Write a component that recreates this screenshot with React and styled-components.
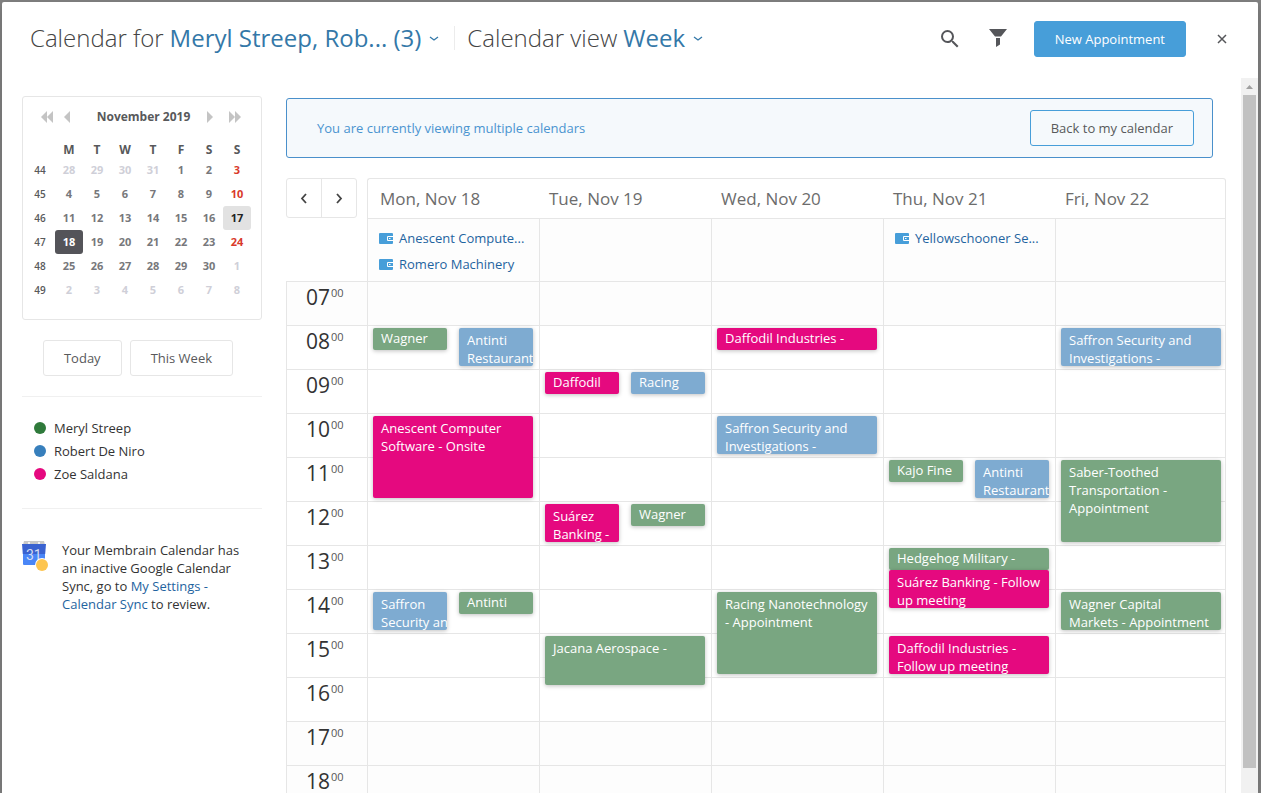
import React from "react";
import styled, { createGlobalStyle, css } from "styled-components";
import { MdSearch } from "react-icons/md";

const GlobalStyle = createGlobalStyle`
  *, *::before, *::after { box-sizing: border-box; }
  body {
    margin: 0;
    background: #828282;
    color: #333;
    font-family: "Open Sans", "Noto Sans", sans-serif;
    font-size: 13px;
    line-height: 18px;
  }
  button { font: inherit; color: inherit; margin: 0; padding: 0; cursor: pointer; }
  a { text-decoration: none; color: #1f64a0; }
  h1, h2, p, ul { margin: 0; padding: 0; font-weight: inherit; font-size: inherit; }
`;

const LINE = "#e6e6e6";
const ROW = 44;
const FIRST_HOUR = 7;

/* Dialog frame */

const Backdrop = styled.div`
  height: 100vh;
  padding: 2px 3px 0 2px;
  overflow: hidden;
`;

const Dialog = styled.div`
  display: flex;
  flex-direction: column;
  height: 100%;
  background: #fff;
  border-radius: 2px 2px 0 0;
  box-shadow: 0 4px 12px rgba(0, 0, 0, 0.2);
`;

const Header = styled.header`
  display: flex;
  align-items: center;
  flex: none;
  height: 76px;
  padding: 0 24px 2px 28px;
`;

const TitleGroup = styled.div`
  display: flex;
  align-items: center;
  flex: 1;
  padding-bottom: 2px;
`;

const Title = styled.h1`
  display: flex;
  align-items: center;
  gap: 6px;
  font-size: 24px;
  line-height: 32px;
  font-weight: 300;
  white-space: nowrap;
  color: #444;
`;

const TitlePicker = styled.button`
  display: flex;
  align-items: center;
  gap: 8px;
  border: 0;
  background: none;
  color: #3478a8;
  font-weight: 400;
`;

const TitleDivider = styled.span`
  width: 1px;
  height: 24px;
  margin: 0 12px 0 15px;
  background: #ececec;
`;

const HeaderActions = styled.div`
  display: flex;
  align-items: center;
  gap: 24px;
`;

const IconButton = styled.button`
  display: flex;
  align-items: center;
  justify-content: center;
  width: 24px;
  height: 24px;
  border: 0;
  background: none;
  color: #55565a;
`;

const buttonKinds = {
  primary: css`
    border-color: #479ed9;
    background: #479ed9;
    color: #fff;
    font-weight: 500;
  `,
  outline: css`
    border-color: #479ed9;
    background: transparent;
    color: #58595b;
  `,
  plain: css`
    border-color: ${LINE};
    background: #fff;
    color: #58595b;
  `,
};

const Button = styled.button`
  height: 36px;
  padding: 0 20px;
  border: 1px solid;
  border-radius: 3px;
  white-space: nowrap;
  ${(p) => buttonKinds[p.$kind || "plain"]}
`;

const Body = styled.div`
  display: flex;
  flex: 1;
  min-height: 0;
`;

const Scroller = styled.div`
  display: flex;
  flex: 1;
  min-width: 0;
  gap: 24px;
  padding: 0 15px 0 20px;
  overflow-y: auto;
  scrollbar-width: none;
`;

const ScrollTrack = styled.div`
  display: flex;
  flex-direction: column;
  flex: none;
  width: 17px;
  padding: 0 2px 25px;
  background: #f1f1f1;
`;

const ScrollArrow = styled.svg`
  display: block;
  flex: none;
  width: 13px;
  height: 17px;
`;

const ScrollThumb = styled.div`
  flex: 1;
  background: #c1c1c1;
`;

/* Sidebar */

const Sidebar = styled.aside`
  flex: none;
  width: 240px;
  padding-top: 18px;
`;

const MonthCard = styled.section`
  height: 224px;
  padding: 11px 10px 0 4px;
  border: 1px solid ${LINE};
  border-radius: 3px;
`;

const MonthNav = styled.div`
  display: flex;
  align-items: center;
  gap: 3px;
  padding: 0 6px 0 10px;
  color: #c4c4c4;
`;

const MonthName = styled.h2`
  flex: 1;
  padding-left: 10px;
  text-align: center;
  font-weight: 700;
  font-size: 12px;
  color: #58595b;
`;

const MonthArrow = styled.button`
  display: flex;
  align-items: center;
  justify-content: center;
  height: 16px;
  padding: 0 4px;
  border: 0;
  background: none;
  ${MonthName} + & + & { padding-left: 9px; }
`;

const MonthTable = styled.table`
  width: 224px;
  margin-top: 15px;
  border-collapse: collapse;
  table-layout: fixed;
  text-align: center;
`;

const WeekdayCell = styled.th`
  height: 17px;
  padding: 0;
  font-size: 12px;
  line-height: 17px;
  font-weight: 700;
  color: #58595b;
`;

const WeekNumber = styled.th`
  height: 24px;
  padding: 0 2px 0 0;
  font-size: 10px;
  font-weight: 600;
  color: #58595b;
`;

const DateCell = styled.td`
  height: 24px;
  padding: 0;
`;

const dateTones = {
  plain: css`color: #77787b;`,
  muted: css`color: #cfcfd8;`,
  sunday: css`color: #d93a2b;`,
  today: css`background: #e2e2e2; color: #222;`,
  selected: css`background: #545459; color: #fff;`,
};

const DateButton = styled.button`
  display: block;
  width: 28px;
  height: 24px;
  border: 0;
  border-radius: 3px;
  background: none;
  font-size: 11px;
  font-weight: 700;
  ${(p) => dateTones[p.$tone]}
`;

const QuickButtons = styled.div`
  display: flex;
  justify-content: center;
  gap: 8px;
  padding: 20px 8px 20px 0;
`;

const Legend = styled.ul`
  display: flex;
  flex-direction: column;
  gap: 5px;
  padding: 22px 12px 25px;
  border: solid #f0f0f0;
  border-width: 1px 0;
  list-style: none;
`;

const LegendItem = styled.li`
  display: flex;
  align-items: center;
  gap: 8px;
`;

const Dot = styled.span`
  width: 12px;
  height: 12px;
  border-radius: 50%;
  background: ${(p) => p.$color};
`;

const SyncNotice = styled.div`
  display: flex;
  gap: 12px;
  padding-top: 32px;
`;

/* Schedule */

const Main = styled.main`
  flex: 1;
  min-width: 0;
  padding-top: 20px;
`;

const Banner = styled.div`
  display: flex;
  align-items: center;
  justify-content: space-between;
  height: 60px;
  margin: 0 13px 20px 0;
  padding: 0 18px 0 30px;
  border: 1px solid #4a90cb;
  border-radius: 3px;
  background: #f5f9fc;
  color: #4a94d0;
`;

const columns = css`
  display: grid;
  grid-template-columns: 81px repeat(4, minmax(0, 172fr)) minmax(0, 171fr);
`;

const HeadRow = styled.div`
  ${columns}
  height: 41px;
`;

const WeekNav = styled.div`
  display: flex;
  width: 71px;
  height: 40px;
  border: 1px solid ${LINE};
  border-radius: 3px;
`;

const WeekNavButton = styled.button`
  display: flex;
  align-items: center;
  justify-content: center;
  flex: 1;
  border: 0;
  background: none;
  color: #444;
  & + & { border-left: 1px solid ${LINE}; }
`;

const DayHead = styled.div`
  padding: 0 0 0 10px;
  border: solid ${LINE};
  border-width: 1px 0;
  font-size: 17px;
  line-height: 39px;
  color: #6c6c6c;
  white-space: nowrap;
  &:nth-child(2) { padding-left: 12px; border-left-width: 1px; border-top-left-radius: 3px; }
  &:last-child { border-right-width: 1px; border-top-right-radius: 3px; }
`;

const AllDayRow = styled.div`
  ${columns}
  min-height: 62px;
`;

const AllDayCell = styled.div`
  display: flex;
  flex-direction: column;
  gap: 8px;
  padding: 10px 11px 0;
  border-left: 1px solid ${LINE};
  background: #fdfdfd;
  &:last-child { border-right: 1px solid ${LINE}; }
`;

const AllDayLink = styled.a`
  display: flex;
  align-items: center;
  gap: 6px;
  white-space: nowrap;
`;

const Hours = styled.div`
  ${columns}
`;

const HourColumn = styled.div`
  position: relative;
  border-bottom: 1px solid ${LINE};
`;

const HourCell = styled.div`
  display: flex;
  height: ${ROW}px;
  border: solid ${LINE};
  border-width: 1px 0 0 1px;
  background: ${(p) => (p.$off ? "#fdfdfd" : "#fff")};
  ${HourColumn}:last-child > & { border-right-width: 1px; }
`;

const HourLabel = styled.span`
  padding: 0 1px 0 19px;
  font-size: 21px;
  line-height: 30px;
`;

const MinuteLabel = styled.span`
  font-size: 11px;
  line-height: 22px;
  color: #555;
`;

const eventColors = { green: "#79a681", blue: "#7eabd1", pink: "#e5097f" };

const EventCard = styled.a`
  position: absolute;
  left: calc(6px + ${(p) => (p.$lane === "right" ? "50%" : "0px")});
  width: calc(${(p) => (p.$lane ? "50%" : "100%")} - 12px);
  padding: ${(p) => (p.$short ? 1 : 3)}px 0 0 8px;
  border-radius: 2px;
  background: ${(p) => eventColors[p.$color]};
  box-shadow: 0 1px 4px rgba(0, 0, 0, 0.25);
  color: #fff;
  font-weight: 500;
  white-space: pre;
  overflow: hidden;
  ${HourColumn}:last-child > & { width: calc(100% - 11px); }
`;

/* Drawings */

const Chevron = ({ d, w, h, stroke = 1.8 }) => (
  <svg width={w} height={h} viewBox={`0 0 ${w} ${h}`} fill="none" stroke="currentColor" strokeWidth={stroke} aria-hidden="true">
    <path d={d} />
  </svg>
);

const DownChevron = () => <Chevron d="M1 3 L5 6 L9 3" w={10} h={8} stroke={1.3} />;

const Triangles = ({ left, double }) => {
  const w = double ? 12 : 6;
  const tri = (x) => (left ? `M${x + 6} 0 V12 L${x} 6 Z` : `M${x} 0 V12 L${x + 6} 6 Z`);
  return (
    <svg width={w} height="12" viewBox={`0 0 ${w} 12`} fill="currentColor" aria-hidden="true">
      <path d={tri(0)} />
      {double && <path d={tri(6)} />}
    </svg>
  );
};

const FilterIcon = () => (
  <svg width="18" height="20" viewBox="0 0 18 20" fill="currentColor" aria-hidden="true">
    <path d="M0 0 H18 L12 7.5 H6 Z M7 9 H11 V15.5 L7 18 Z" />
  </svg>
);

const WalletIcon = () => (
  <svg width="14" height="11" viewBox="0 0 14 11" aria-hidden="true">
    <rect width="14" height="11" rx="1" fill="#479ed9" />
    <path d="M14 3.5 H8.5 V7.5 H14" fill="none" stroke="#fff" />
    <rect x="10" y="5" width="1.5" height="1" fill="#fff" />
  </svg>
);

const GoogleCalendarIcon = () => (
  <svg width="28" height="32" viewBox="0 0 28 32" role="img" aria-label="Google Calendar">
    <path d="M2 0 H22 L23 4 H1 Z" fill="#c8c8c8" />
    <circle cx="7" cy="2" r="1" fill="#fff" />
    <circle cx="17" cy="2" r="1" fill="#fff" />
    <path d="M1 10 H23 V24 H2 Q1 24 1 23 Z" fill="#4a86f7" />
    <path d="M0 3 H24 L23.2 13 H0.8 Z" fill="#3a62d0" />
    <text x="4" y="19" fontSize="14" fill="#d5ddf2" fontFamily="Roboto, sans-serif">31</text>
    <circle cx="20" cy="24" r="7" fill="#fff" />
    <circle cx="20" cy="24" r="6" fill="#fdc550" />
  </svg>
);

/* Data */

const weeks = [
  [44, [28, 29, 30, 31, 1, 2, 3]],
  [45, [4, 5, 6, 7, 8, 9, 10]],
  [46, [11, 12, 13, 14, 15, 16, 17]],
  [47, [18, 19, 20, 21, 22, 23, 24]],
  [48, [25, 26, 27, 28, 29, 30, 1]],
  [49, [2, 3, 4, 5, 6, 7, 8]],
];

const dateTone = (week, day, index) => {
  if ((week === 44 && day > 20) || (week >= 48 && day < 20)) return "muted";
  if (day === 17) return "today";
  if (day === 18) return "selected";
  return index === 6 ? "sunday" : "plain";
};

const people = [
  ["Meryl Streep", "#2f7a3b"],
  ["Robert De Niro", "#377fbc"],
  ["Zoe Saldana", "#e5097f"],
];

const days = [
  {
    name: "Mon, Nov 18",
    allDay: ["Anescent Compute...", "Romero Machinery"],
    events: [
      { at: 8, hours: 0.5, color: "green", lane: "left", text: "Wagner" },
      { at: 8, hours: 1, color: "blue", lane: "right", text: "Antinti\nRestaurant" },
      { at: 10, hours: 2, color: "pink", text: "Anescent Computer\nSoftware - Onsite" },
      { at: 14, hours: 1, color: "blue", lane: "left", text: "Saffron\nSecurity and" },
      { at: 14, hours: 0.5, color: "green", lane: "right", text: "Antinti" },
    ],
  },
  {
    name: "Tue, Nov 19",
    allDay: [],
    events: [
      { at: 9, hours: 0.5, color: "pink", lane: "left", text: "Daffodil" },
      { at: 9, hours: 0.5, color: "blue", lane: "right", text: "Racing" },
      { at: 12, hours: 1, color: "pink", lane: "left", text: "Suárez\nBanking -" },
      { at: 12, hours: 0.5, color: "green", lane: "right", text: "Wagner" },
      { at: 15, hours: 1.25, color: "green", text: "Jacana Aerospace -" },
    ],
  },
  {
    name: "Wed, Nov 20",
    allDay: [],
    events: [
      { at: 8, hours: 0.5, color: "pink", text: "Daffodil Industries -" },
      { at: 10, hours: 1, color: "blue", text: "Saffron Security and\nInvestigations -" },
      { at: 14, hours: 2, color: "green", text: "Racing Nanotechnology\n- Appointment" },
    ],
  },
  {
    name: "Thu, Nov 21",
    allDay: ["Yellowschooner Se..."],
    events: [
      { at: 11, hours: 0.5, color: "green", lane: "left", text: "Kajo Fine" },
      { at: 11, hours: 1, color: "blue", lane: "right", text: "Antinti\nRestaurant" },
      { at: 13, hours: 0.5, color: "green", text: "Hedgehog Military -" },
      { at: 13.5, hours: 1, color: "pink", text: "Suárez Banking - Follow\nup meeting" },
      { at: 15, hours: 1, color: "pink", text: "Daffodil Industries -\nFollow up meeting" },
    ],
  },
  {
    name: "Fri, Nov 22",
    allDay: [],
    events: [
      { at: 8, hours: 1, color: "blue", text: "Saffron Security and\nInvestigations -" },
      { at: 11, hours: 2, color: "green", text: "Saber-Toothed\nTransportation -\nAppointment" },
      { at: 14, hours: 1, color: "green", text: "Wagner Capital\nMarkets - Appointment" },
    ],
  },
];

const hours = Array.from({ length: 12 }, (_, i) => FIRST_HOUR + i);
const isOff = (hour) => hour < 8 || hour > 16;

const Event = ({ at, hours: length, color, lane, text }) => (
  <EventCard
    href="#"
    $color={color}
    $lane={lane}
    $short={length < 1}
    style={{
      top: (at - FIRST_HOUR) * ROW + 3,
      height: Math.max(22, length * ROW - 6),
    }}
  >
    {text}
  </EventCard>
);

const MiniMonth = () => (
  <MonthCard>
    <MonthNav>
      <MonthArrow aria-label="Previous year"><Triangles left double /></MonthArrow>
      <MonthArrow aria-label="Previous month"><Triangles left /></MonthArrow>
      <MonthName>November 2019</MonthName>
      <MonthArrow aria-label="Next month"><Triangles /></MonthArrow>
      <MonthArrow aria-label="Next year"><Triangles double /></MonthArrow>
    </MonthNav>
    <MonthTable>
      <thead>
        <tr>
          <WeekdayCell />
          {["M", "T", "W", "T", "F", "S", "S"].map((d, i) => (
            <WeekdayCell key={i} scope="col">{d}</WeekdayCell>
          ))}
        </tr>
      </thead>
      <tbody>
        {weeks.map(([week, dates]) => (
          <tr key={week}>
            <WeekNumber scope="row">{week}</WeekNumber>
            {dates.map((day, i) => (
              <DateCell key={i}>
                <DateButton $tone={dateTone(week, day, i)}>{day}</DateButton>
              </DateCell>
            ))}
          </tr>
        ))}
      </tbody>
    </MonthTable>
  </MonthCard>
);

export default function App() {
  return (
    <>
      <GlobalStyle />
      <Backdrop>
        <Dialog role="dialog" aria-label="Calendar">
          <Header>
            <TitleGroup>
              <Title>
                Calendar for
                <TitlePicker>Meryl Streep, Rob... (3) <DownChevron /></TitlePicker>
              </Title>
              <TitleDivider />
              <Title as="h2">
                Calendar view
                <TitlePicker>Week <DownChevron /></TitlePicker>
              </Title>
            </TitleGroup>
            <HeaderActions>
              <IconButton aria-label="Search"><MdSearch size={24} /></IconButton>
              <IconButton aria-label="Filter"><FilterIcon /></IconButton>
              <Button $kind="primary">New Appointment</Button>
              <IconButton aria-label="Close">
                <Chevron d="M1 1 L9 9 M9 1 L1 9" w={10} h={10} stroke={1.5} />
              </IconButton>
            </HeaderActions>
          </Header>

          <Body>
            <Scroller>
              <Sidebar>
                <MiniMonth />
                <QuickButtons>
                  <Button>Today</Button>
                  <Button>This Week</Button>
                </QuickButtons>
                <Legend>
                  {people.map(([name, color]) => (
                    <LegendItem key={name}><Dot $color={color} />{name}</LegendItem>
                  ))}
                </Legend>
                <SyncNotice>
                  <GoogleCalendarIcon />
                  <p>
                    Your Membrain Calendar has<br />
                    an inactive Google Calendar<br />
                    Sync, go to <a href="#">My Settings -<br />Calendar Sync</a> to review.
                  </p>
                </SyncNotice>
              </Sidebar>

              <Main>
                <Banner>
                  You are currently viewing multiple calendars
                  <Button $kind="outline">Back to my calendar</Button>
                </Banner>

                <HeadRow>
                  <WeekNav>
                    <WeekNavButton aria-label="Previous week">
                      <Chevron d="M6 1 L2 5.5 L6 10" w={8} h={11} />
                    </WeekNavButton>
                    <WeekNavButton aria-label="Next week">
                      <Chevron d="M2 1 L6 5.5 L2 10" w={8} h={11} />
                    </WeekNavButton>
                  </WeekNav>
                  {days.map((day) => <DayHead key={day.name}>{day.name}</DayHead>)}
                </HeadRow>

                <AllDayRow>
                  <span />
                  {days.map((day) => (
                    <AllDayCell key={day.name}>
                      {day.allDay.map((name) => (
                        <AllDayLink href="#" key={name}><WalletIcon />{name}</AllDayLink>
                      ))}
                    </AllDayCell>
                  ))}
                </AllDayRow>

                <Hours>
                  <HourColumn>
                    {hours.map((h) => (
                      <HourCell key={h} $off={isOff(h)}>
                        <HourLabel>{String(h).padStart(2, "0")}</HourLabel>
                        <MinuteLabel>00</MinuteLabel>
                      </HourCell>
                    ))}
                  </HourColumn>
                  {days.map((day) => (
                    <HourColumn key={day.name}>
                      {hours.map((h) => <HourCell key={h} $off={isOff(h)} />)}
                      {day.events.map((e) => <Event key={`${e.at}-${e.text}`} {...e} />)}
                    </HourColumn>
                  ))}
                </Hours>
              </Main>
            </Scroller>
            <ScrollTrack aria-hidden="true">
              <ScrollArrow viewBox="0 0 13 17"><path d="M3 11 L6.5 7 L10 11 Z" fill="#a0a0a0" /></ScrollArrow>
              <ScrollThumb />
            </ScrollTrack>
          </Body>
        </Dialog>
      </Backdrop>
    </>
  );
}
